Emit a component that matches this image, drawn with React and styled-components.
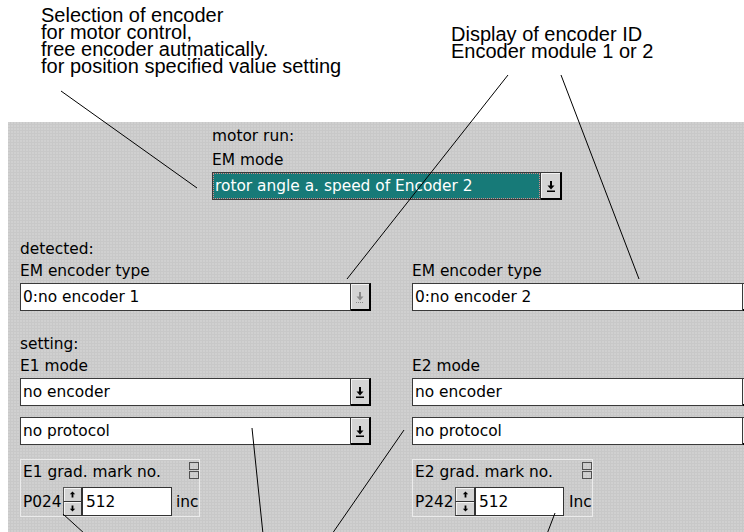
import React from 'react';
import styled, { createGlobalStyle } from 'styled-components';

const Global = createGlobalStyle`
  html, body { margin: 0; padding: 0; background: #fff; overflow: hidden; }
  body { width: 744px; height: 532px; }
`;

const Page = styled.div`
  position: relative;
  width: 744px;
  height: 532px;
  overflow: hidden;
  display: flex;
  flex-direction: column;
`;

const Header = styled.div`
  flex: none;
  height: 122px;
  box-sizing: border-box;
  padding-left: 41px;
  display: grid;
  grid-template-columns: 410px auto;
  align-items: start;
`;

const Note = styled.div`
  font-family: "Liberation Sans", Arial, sans-serif;
  font-size: 20px;
  line-height: 17px;
  color: #000;
  white-space: nowrap;
  margin-top: ${(p) => p.$top}px;
`;

const Panel = styled.div`
  flex: 1;
  margin-left: 8px;
  background-color: #c8c8c8;
  background-image: radial-gradient(circle at 1px 1px, rgba(255, 255, 255, 0.22) 0.6px, transparent 0.9px);
  background-size: 3px 3px;
  padding: 2px 0 0 12px;
  font-family: "DejaVu Sans", "Liberation Sans", sans-serif;
  font-size: 15.4px;
  color: #000;
  min-width: 0;
`;

const MotorRun = styled.div`
  margin-left: 192px;
  display: flex;
  flex-direction: column;
`;

const Label = styled.div`
  line-height: 24px;
  height: 24px;
  white-space: nowrap;
`;

const SectionLabel = styled.div`
  grid-column: 1 / -1;
  line-height: 24px;
  height: 22px;
  white-space: nowrap;
  margin-top: ${(p) => p.$gap || 0}px;
`;

const Grid = styled.div`
  display: grid;
  grid-template-columns: 351px 352px;
  column-gap: 41px;
  margin-top: 37px;
`;

const Group = styled.div`
  display: flex;
  flex-direction: column;
  gap: 11px;
`;

const LabelledGroup = styled.div`
  display: flex;
  flex-direction: column;
`;

const Combo = styled.div`
  display: flex;
  height: 28px;
`;

const Field = styled.div`
  width: ${(p) => p.$w}px;
  height: 28px;
  box-sizing: border-box;
  border: 1px solid #3a3a3a;
  background: ${(p) => (p.$selected ? '#177a78' : '#fff')};
  color: ${(p) => (p.$selected ? '#fff' : '#000')};
  outline: ${(p) => (p.$selected ? '1px dotted #d88a8a' : 'none')};
  outline-offset: -2px;
  display: flex;
  align-items: center;
  padding-left: 2px;
  white-space: nowrap;
  overflow: hidden;
`;

const DropButton = styled.div`
  flex: none;
  width: ${(p) => p.$w || 20}px;
  height: 28px;
  box-sizing: border-box;
  background: #d4d4d4;
  border-top: 1px solid #3a3a3a;
  border-right: 2px solid #000;
  border-bottom: 2px solid #000;
  box-shadow: inset 1px 1px 0 #f4f4f4;
  display: flex;
  align-items: center;
  justify-content: center;
`;

const GradBox = styled.div`
  width: ${(p) => p.$w}px;
  height: 58px;
  box-sizing: border-box;
  border: 1px solid #ebebeb;
  padding: 2px 0 0 2px;
  display: flex;
  flex-direction: column;
  margin-top: 14px;
`;

const GradHead = styled.div`
  height: 25px;
  display: flex;
  justify-content: space-between;
  align-items: flex-start;
`;

const HeadText = styled.div`
  line-height: 24px;
  margin-top: -2px;
`;

const Squares = styled.div`
  display: flex;
  flex-direction: column;
  gap: 1px;
`;

const Square = styled.div`
  width: 10px;
  height: 8px;
  box-sizing: border-box;
  border: 1px solid #505050;
`;

const ValueRow = styled.div`
  height: 29px;
  display: flex;
  align-items: center;
`;

const Param = styled.span`
  width: 40px;
`;

const Spinner = styled.div`
  width: ${(p) => p.$w}px;
  height: 29px;
  display: flex;
  flex-direction: column;
`;

const SpinHalf = styled.div`
  flex: 1;
  box-sizing: border-box;
  background: #d4d4d4;
  border-right: 1px solid #333;
  border-bottom: 1px solid #333;
  border-left: 1px solid #555;
  border-top: ${(p) => (p.$top ? '1px solid #555' : 'none')};
  box-shadow: inset 1px 1px 0 #f4f4f4;
  display: flex;
  align-items: center;
  justify-content: center;
`;

const ValueInput = styled.div`
  width: ${(p) => p.$w}px;
  height: 29px;
  box-sizing: border-box;
  background: #fff;
  border: 1px solid #333;
  display: flex;
  align-items: center;
  padding-left: 3px;
`;

const Unit = styled.span`
  margin-left: ${(p) => p.$gap}px;
`;

const Overlay = styled.svg`
  position: absolute;
  left: 0;
  top: 0;
  pointer-events: none;
`;

const DownIcon = ({ disabled }) => (
  <svg width="10" height="12" viewBox="0 0 10 12">
    {disabled ? (
      <g fill="#8a8a8a">
        <path d="M4 1h2v5H4z" />
        <path d="M1.5 5.5h7L5 9.5z" />
        <path d="M1 11h1v1H1zM3 11h1v1H3zM5 11h1v1H5zM7 11h1v1H7z" />
      </g>
    ) : (
      <g fill="#000">
        <path d="M4 1h2v5H4z" />
        <path d="M1.5 5.5h7L5 9.5z" />
        <path d="M1 10.5h8v1.5H1z" />
      </g>
    )}
  </svg>
);

const SpinArrow = ({ up }) => (
  <svg width="7" height="7" viewBox="0 0 7 7">
    {up ? (
      <path d="M3.5 0.5L0.8 3.2h1.8V6.5h1.8V3.2h1.8z" fill="#000" />
    ) : (
      <path d="M3.5 6.5L0.8 3.8h1.8V0.5h1.8v3.3h1.8z" fill="#000" />
    )}
  </svg>
);

const Dropdown = ({ value, w, btnW, selected, disabled }) => (
  <Combo>
    <Field $w={w} $selected={selected}>{value}</Field>
    <DropButton $w={btnW}>
      <DownIcon disabled={disabled} />
    </DropButton>
  </Combo>
);

const Grad = ({ title, param, value, unit, w, spinW, inputW, unitGap }) => (
  <GradBox $w={w}>
    <GradHead>
      <HeadText>{title}</HeadText>
      <Squares>
        <Square />
        <Square />
      </Squares>
    </GradHead>
    <ValueRow>
      <Param>{param}</Param>
      <Spinner $w={spinW}>
        <SpinHalf $top>
          <SpinArrow up />
        </SpinHalf>
        <SpinHalf>
          <SpinArrow />
        </SpinHalf>
      </Spinner>
      <ValueInput $w={inputW}>{value}</ValueInput>
      <Unit $gap={unitGap}>{unit}</Unit>
    </ValueRow>
  </GradBox>
);

const lines = [
  [61, 91, 197, 188],
  [508, 75, 347, 279],
  [561, 75, 639, 279],
  [63, 514, 85, 534],
  [252, 428, 263, 534],
  [404, 430, 332, 534],
  [555, 513, 547, 534],
];

export default function App() {
  return (
    <Page>
      <Global />
      <Header>
        <Note $top={7}>
          Selection of encoder
          <br />
          for motor control,
          <br />
          free encoder autmatically.
          <br />
          for position specified value setting
        </Note>
        <Note $top={26}>
          Display of encoder ID
          <br />
          Encoder module 1 or 2
        </Note>
      </Header>
      <Panel>
        <MotorRun>
          <Label>motor run:</Label>
          <Label>EM mode</Label>
          <Dropdown value="rotor angle a. speed of Encoder 2" w={329} btnW={21} selected />
        </MotorRun>
        <Grid>
          <SectionLabel>detected:</SectionLabel>
          <LabelledGroup>
            <Label>EM encoder type</Label>
            <Dropdown value="0:no encoder 1" w={331} disabled />
          </LabelledGroup>
          <LabelledGroup>
            <Label>EM encoder type</Label>
            <Dropdown value="0:no encoder 2" w={331} disabled />
          </LabelledGroup>
          <SectionLabel $gap={21}>setting:</SectionLabel>
          <LabelledGroup>
            <Label>E1 mode</Label>
            <Group>
              <Dropdown value="no encoder" w={331} />
              <Dropdown value="no protocol" w={331} />
            </Group>
          </LabelledGroup>
          <LabelledGroup>
            <Label>E2 mode</Label>
            <Group>
              <Dropdown value="no encoder" w={331} />
              <Dropdown value="no protocol" w={331} />
            </Group>
          </LabelledGroup>
          <Grad title="E1 grad. mark no." param="P024" value="512" unit="inc" w={180} spinW={19} inputW={90} unitGap={4} />
          <Grad title="E2 grad. mark no." param="P242" value="512" unit="Inc" w={181} spinW={20} inputW={89} unitGap={5} />
        </Grid>
      </Panel>
      <Overlay width="744" height="532" viewBox="0 0 744 532">
        {lines.map(([x1, y1, x2, y2], i) => (
          <line key={i} x1={x1} y1={y1} x2={x2} y2={y2} stroke="#000" strokeWidth="1" />
        ))}
      </Overlay>
    </Page>
  );
}
